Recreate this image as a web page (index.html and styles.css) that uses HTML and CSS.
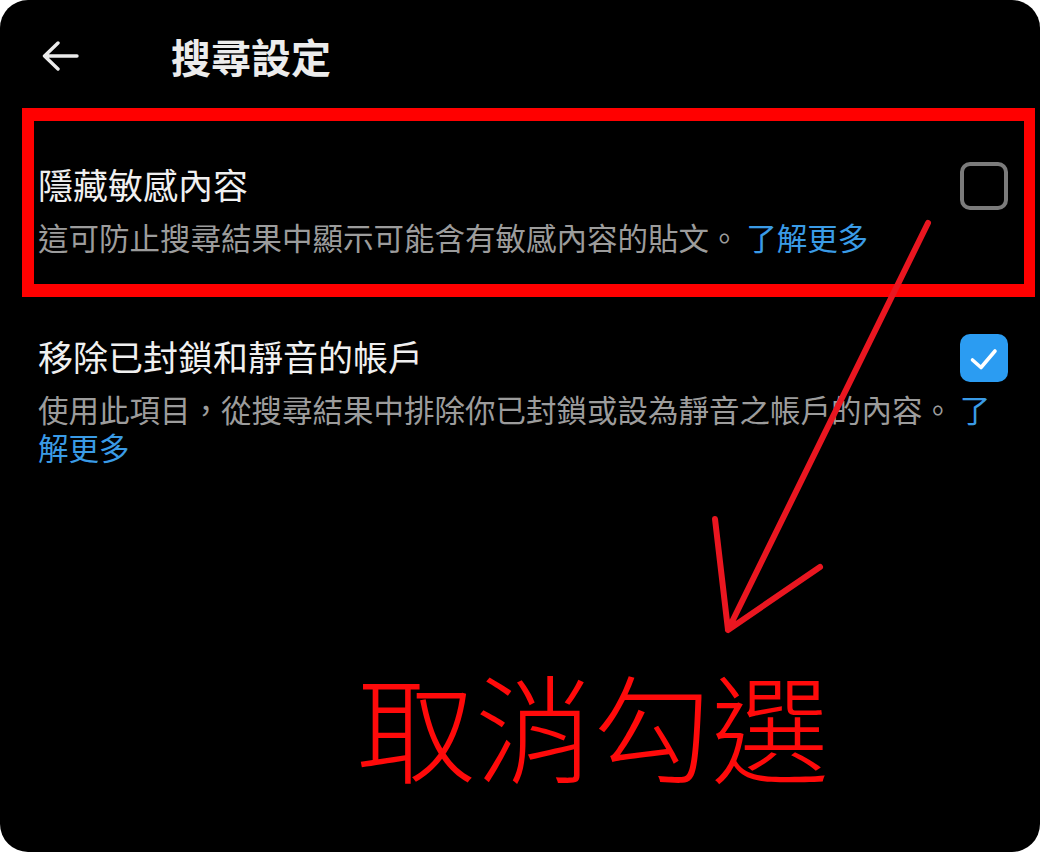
FILE: index.html
```html
<!DOCTYPE html>
<html lang="zh-Hant">
<head>
<meta charset="utf-8">
<title>搜尋設定</title>
<link rel="stylesheet" href="styles.css">
</head>
<body>
<div class="screen">
  <header class="topbar">
    <svg class="back" viewBox="0 0 37 30" width="37" height="30" aria-hidden="true">
      <path d="M2.5 15 H35 M16 2 L2.5 15 L16 28" fill="none" stroke="#ececec" stroke-width="3.4" stroke-linecap="round" stroke-linejoin="round"/>
    </svg>
    <h1 class="title">搜尋設定</h1>
  </header>

  <section class="setting first">
    <div class="setting-title">隱藏敏感內容</div>
    <div class="checkbox"></div>
    <p class="setting-desc">這可防止搜尋結果中顯示可能含有敏感內容的貼文。 <span class="link">了解更多</span></p>
  </section>

  <section class="setting second">
    <div class="setting-title">移除已封鎖和靜音的帳戶</div>
    <div class="checkbox checked">
      <svg viewBox="0 0 48 48" width="48" height="48" aria-hidden="true">
        <path d="M12.5 26 L21 33.5 L35 17" fill="none" stroke="#ffffff" stroke-width="3.6" stroke-linecap="round" stroke-linejoin="round"/>
      </svg>
    </div>
    <p class="setting-desc">使用此項目，從搜尋結果中排除你已封鎖或設為靜音之帳戶的內容。 <span class="link">了解更多</span></p>
  </section>

  <div class="highlight-box"></div>
  <svg class="annot-arrow" viewBox="0 0 1040 852" width="1040" height="852" aria-hidden="true">
    <path d="M928 223 L728 630 M715 519 L728 630 L820 567" fill="none" stroke="#ea1620" stroke-width="6" stroke-linecap="round" stroke-linejoin="round"/>
  </svg>
  <div class="annot-text">取消勾選</div>
</div>
</body>
</html>
```

FILE: styles.css
```css
html, body {
  margin: 0;
  padding: 0;
  background: #ffffff;
}

body {
  font-family: "Noto Sans CJK TC", "Noto Sans", sans-serif;
}

.screen {
  position: relative;
  width: 1040px;
  height: 852px;
  background: #000000;
  border-radius: 28px;
  overflow: hidden;
  box-sizing: border-box;
  padding: 0 32px 0 38px;
}

.topbar {
  display: flex;
  align-items: center;
  height: 108px;
  padding-top: 4px;
  box-sizing: border-box;
  margin-left: 4px;
}

.back {
  display: block;
  flex: none;
}

.title {
  margin: 0 0 0 92px;
  font-size: 40px;
  line-height: 48px;
  font-weight: 700;
  color: #ececec;
}

.setting {
  display: grid;
  grid-template-columns: 1fr 48px;
  align-items: start;
}

.setting.first {
  padding-top: 54px;
}

.setting.second {
  margin-top: 78px;
}

.setting-title {
  font-size: 35px;
  line-height: 44px;
  color: #f0f0f0;
}

.checkbox {
  width: 48px;
  height: 48px;
  margin-top: 0;
  box-sizing: border-box;
  border: 4px solid #7b7b7b;
  border-radius: 10px;
}

.checkbox.checked {
  border: none;
  background: #2b9cf2;
}

.checkbox svg {
  display: block;
}

.setting-desc {
  grid-column: 1 / -1;
  margin: 8px 0 0;
  font-size: 30.5px;
  line-height: 38px;
  color: #9c9c9c;
}

.link {
  color: #3a9be6;
}

.highlight-box {
  position: absolute;
  left: 22px;
  top: 108px;
  width: 1013px;
  height: 189px;
  box-sizing: border-box;
  border-style: solid;
  border-color: #ff0000;
  border-width: 13px 11px 13px 12px;
  pointer-events: none;
}

.annot-arrow {
  position: absolute;
  left: 0;
  top: 0;
  pointer-events: none;
}

.annot-text {
  position: absolute;
  left: 357px;
  top: 665px;
  font-size: 118px;
  line-height: 1;
  font-weight: 300;
  color: #ff0a0a;
  white-space: nowrap;
}
```
